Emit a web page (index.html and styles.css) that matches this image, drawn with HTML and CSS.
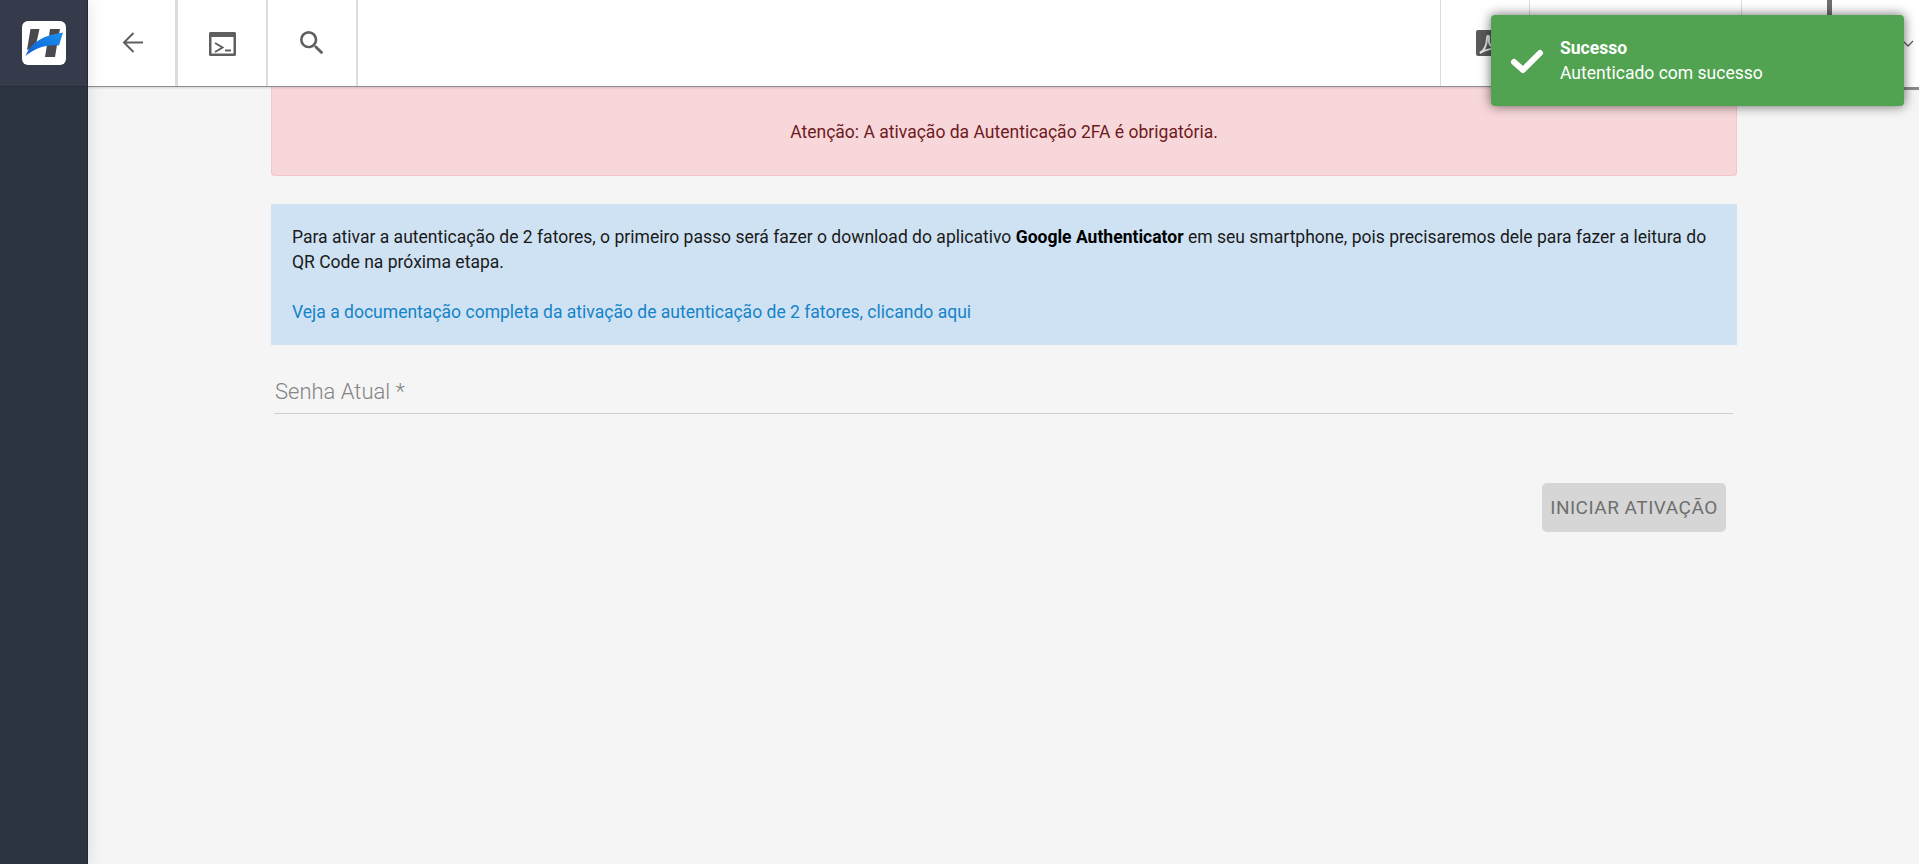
FILE: index.html
```html
<!DOCTYPE html>
<html lang="pt-BR">
<head>
  <meta charset="UTF-8" />
  <title>Autenticação 2FA</title>
  <link rel="stylesheet" href="styles.css">
</head>
<body>

<div class="app">
  <aside class="sidebar">
    <div class="brand">
      <div class="logo">
        <svg width="44" height="44" viewBox="0 0 44 44">
          <defs>
            <linearGradient id="swoosh" x1="0" y1="1" x2="1" y2="0">
              <stop offset="0" stop-color="#0b5bd6"/>
              <stop offset="1" stop-color="#1c93ee"/>
            </linearGradient>
          </defs>
          <path d="M8.500 8H17.500L13.500 26 5 29z" fill="#4a4a4e"/>
          <path d="M28 8H38L37 13 27 15z" fill="#4a4a4e"/>
          <path d="M25 24H35L33 36H23z" fill="#4a4a4e"/>
          <path d="M3.500 35C9 21 22 14 41 11.500L37 24.500C25 23 13 27 3.500 35z" fill="url(#swoosh)"/>
        </svg>
      </div>
    </div>
  </aside>

  <div class="main">
    <header class="topbar">
      <button class="tool tool-back">
        <svg width="22" height="22" viewBox="0 0 22 22"><path d="M21 10.500H2M11.500 1 2 10.500l9.500 9.500" fill="none" stroke="#5f5f5f" stroke-width="2"/></svg>
      </button>
      <button class="tool">
        <svg class="icon-terminal" width="27" height="24" viewBox="0 0 27 24"><path d="M1.500 0h24C26.300 0 27 .7 27 1.500v21c0 .8-.7 1.500-1.500 1.500h-24C.7 24 0 23.300 0 22.500v-21C0 .7.7 0 1.500 0zM2.500 5v16.500h22V5z" fill="#5f5f5f"/><path d="M6 11l7.500 4.500L6 20" fill="none" stroke="#5f5f5f" stroke-width="2"/><path d="M16 18.500h6" stroke="#5f5f5f" stroke-width="2"/></svg>
      </button>
      <button class="tool">
        <svg width="32" height="32" viewBox="0 0 24 24"><path d="M15.500 14h-.79l-.28-.27A6.470 6.470 0 0 0 16 9.500 6.500 6.500 0 1 0 9.500 16c1.610 0 3.090-.59 4.230-1.570l.27.28v.79l5 4.990L20.490 19l-4.990-5zm-6 0C7.010 14 5 11.990 5 9.500S7.010 5 9.500 5 14 7.010 14 9.500 11.990 14 9.500 14z" fill="#5f5f5f"/></svg>
      </button>
      <div class="spacer"></div>
      <button class="tool tool-pdf">
        <svg width="28" height="28" viewBox="0 0 28 28"><rect x="1" y="1" width="26" height="26" rx="2" fill="#5a5a5a"/><path d="M5 24c4-2 7-8 7-15 0-3 3-3 2 1-1 6 4 10 10 10-5-1-13 0-19 4z" fill="none" stroke="#e8e8e8" stroke-width="2"/></svg>
      </button>
      <div class="tool tool-wide"></div>
      <div class="tool tool-last"></div>
      <div class="tool tool-user">
        <svg width="12" height="8" viewBox="0 0 12 8"><path d="M1 1l5 5 5-5" fill="none" stroke="#5f5f5f" stroke-width="1.300"/></svg>
      </div>
    </header>

    <section class="content">
      <div class="alert-danger">Atenção: A ativação da Autenticação 2FA é obrigatória.</div>

      <div class="info-box">
        <p>Para ativar a autenticação de 2 fatores, o primeiro passo será fazer o download do aplicativo <strong>Google Authenticator</strong> em seu smartphone, pois precisaremos dele para fazer a leitura do QR Code na próxima etapa.</p>
        <a href="#">Veja a documentação completa da ativação de autenticação de 2 fatores, clicando aqui</a>
      </div>

      <div class="field">Senha Atual *</div>

      <div class="actions">
        <button class="btn-disabled">INICIAR ATIVAÇÃO</button>
      </div>
    </section>
  </div>
</div>

<div class="toast">
  <svg width="34" height="26" viewBox="0 0 34 26"><path d="M4 14l9 8L30 5" fill="none" stroke="#fff" stroke-width="6" stroke-linecap="round" stroke-linejoin="round"/></svg>
  <div>
    <div class="toast-title">Sucesso</div>
    <div>Autenticado com sucesso</div>
  </div>
</div>

</body>
</html>
```

FILE: styles.css
```css
* {
  box-sizing: border-box;
}

body {
  margin: 0;
  height: 864px;
  overflow: hidden;
  font-family: Roboto, "Liberation Sans", sans-serif;
  font-size: 17.55px;
  background: #f5f5f5;
}

.app {
  display: flex;
  height: 864px;
}

.sidebar {
  width: 88px;
  flex: none;
  position: relative;
  z-index: 2;
  background: #2c3341;
  border-right: 1px solid #232936;
  box-shadow: 0 0 16px rgba(0, 0, 0, 0.12);
}

.brand {
  height: 87px;
  display: flex;
  align-items: center;
  justify-content: center;
  background: #353b4a;
  border-bottom: 1px solid #262c38;
}

.logo {
  width: 44px;
  height: 44px;
  background: white;
  border-radius: 6px;
}

.logo svg {
  display: block;
}

.main {
  flex: 1;
  min-width: 0;
}

.topbar {
  height: 87px;
  display: flex;
  background: white;
  border-bottom: 1px solid #8f8f8f;
  box-shadow: 0 1px 2px rgba(0, 0, 0, 0.15);
  position: relative;
}

.tool {
  width: 90px;
  height: 86px;
  flex: none;
  display: flex;
  align-items: center;
  justify-content: center;
  padding: 0;
  background: white;
  border: none;
  border-right: 2px solid #dcdcdc;
}

.tool-back {
  border-right-width: 3px;
  padding-left: 2px;
}

.icon-terminal {
  margin-top: 2px;
}

.spacer {
  flex: 1;
}

.tool-pdf {
  border-left: 1px solid #dcdcdc;
  border-right: 1px solid #dcdcdc;
  justify-content: flex-start;
  padding-left: 34px;
}

.tool-wide {
  width: 212px;
  border-right: 1px solid #dcdcdc;
}

.tool-last {
  width: 85px;
  border-right: none;
}

.tool-user {
  width: 92px;
  height: 90px;
  padding-right: 5px;
  justify-content: flex-end;
  border-left: 5px solid #6f6f6f;
  border-right: none;
  border-bottom: 3px solid #8a8a8a;
}

.content {
  padding: 0 182px 0 183px;
}

.alert-danger {
  height: 89px;
  padding-top: 1px;
  display: flex;
  align-items: center;
  justify-content: center;
  color: #6e1a22;
  background: #f8d7da;
  border: 1px solid #f5c6cb;
  border-top: none;
  border-radius: 0 0 4px 4px;
}

.info-box {
  margin-top: 28px;
  height: 141px;
  padding: 21px 21px 0 21px;
  line-height: 25px;
  color: #1a1a1a;
  background: #cfe2f3;
}

.info-box p {
  margin: 0 0 25px;
}

.info-box strong {
  color: black;
}

.info-box a {
  color: #1583c9;
  text-decoration: none;
}

.field {
  margin: 33px 4px 0 3px;
  height: 36px;
  padding: 1px 0 0 1px;
  font-size: 22px;
  font-weight: 300;
  color: #848484;
  border-bottom: 1px solid #cfcfcf;
}

.actions {
  display: flex;
  justify-content: flex-end;
  margin-top: 69px;
  padding-right: 11px;
}

.btn-disabled {
  width: 184px;
  height: 49px;
  padding: 0;
  font-family: inherit;
  font-size: 19px;
  letter-spacing: 0.5px;
  color: #6f6f6f;
  background: #d6d6d6;
  border: none;
  border-radius: 5px;
}

.toast {
  position: absolute;
  top: 15px;
  left: 1491px;
  width: 413px;
  height: 91px;
  display: flex;
  align-items: center;
  gap: 16px;
  padding-left: 19px;
  color: white;
  line-height: 25px;
  background: #51a351;
  border-radius: 4px;
  box-shadow: 0 0 12px rgba(0, 0, 0, 0.6);
}

.toast-title {
  font-weight: 700;
}
```
